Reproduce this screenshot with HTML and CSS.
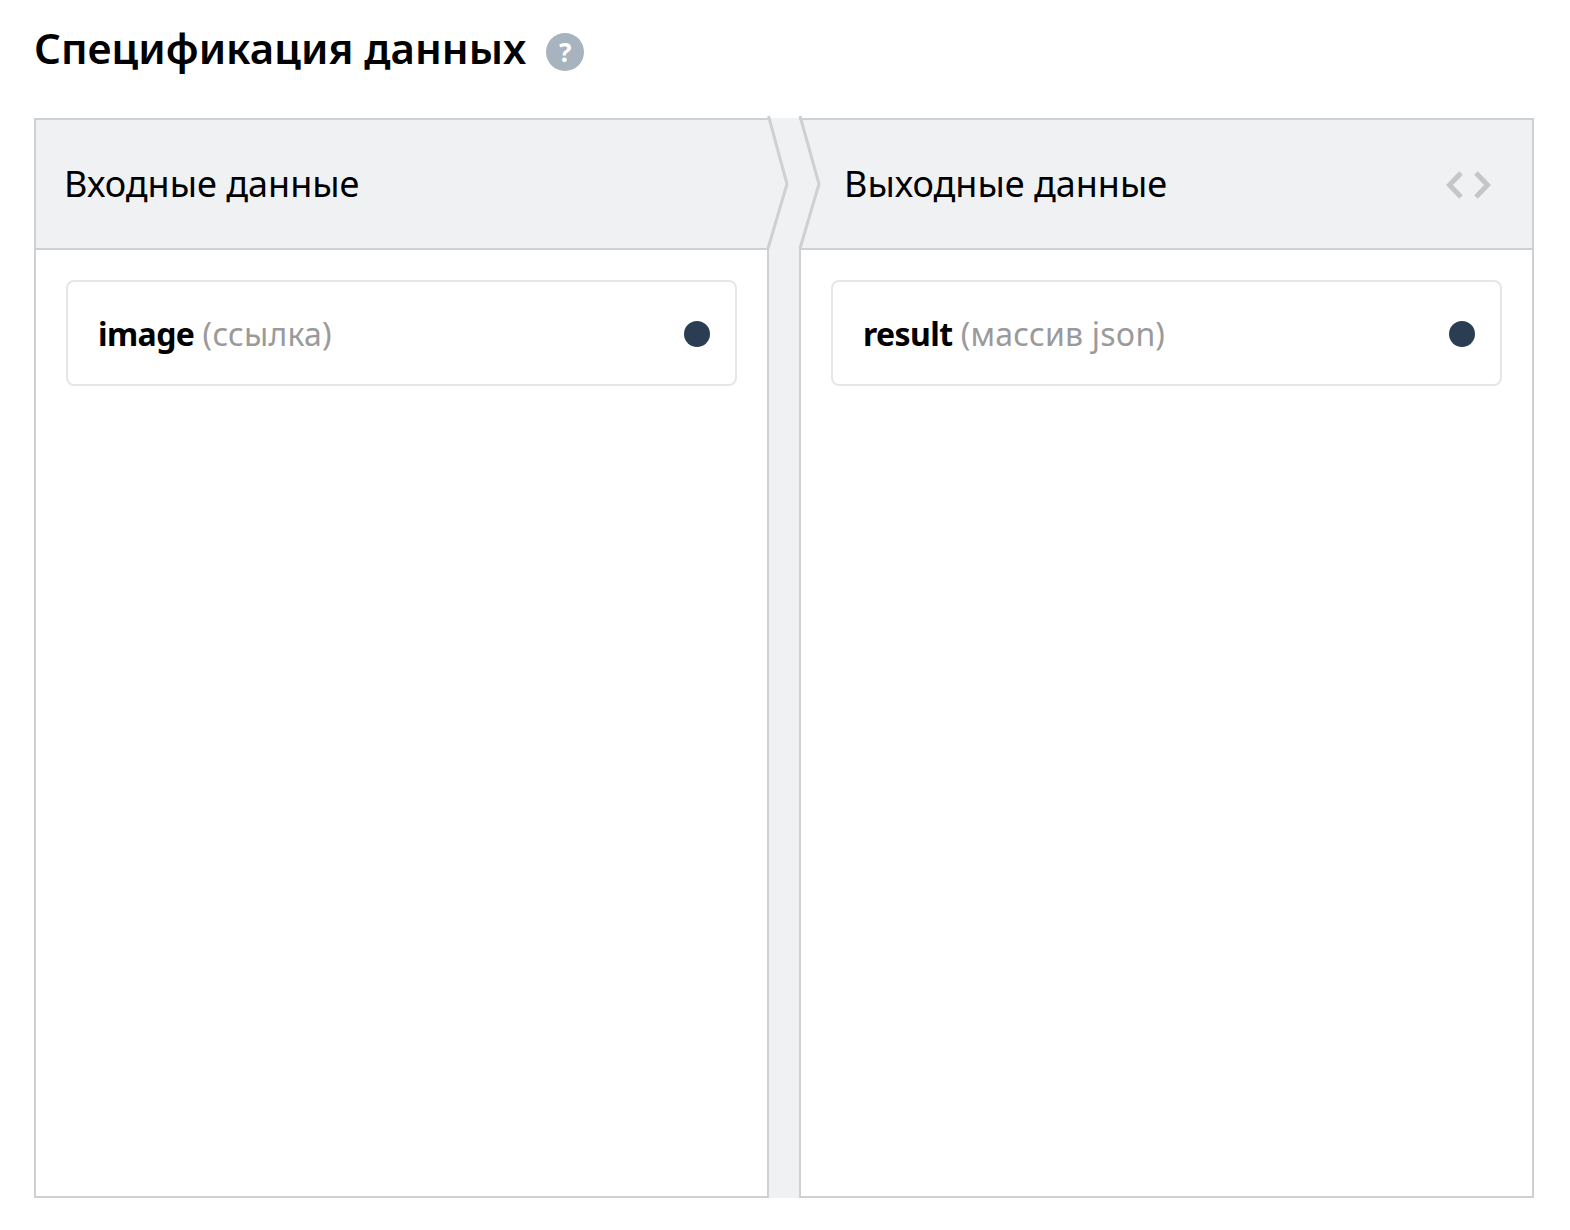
FILE: index.html
```
<!DOCTYPE html>
<html lang="ru">
<head>
<meta charset="utf-8">
<title>Спецификация данных</title>
<link rel="stylesheet" href="styles.css">
</head>
<body>
<div class="title-row">
  <h1 class="title">Спецификация данных</h1>
  <span class="help">?</span>
</div>
<div class="spec">
  <section class="panel panel-left">
    <header class="panel-head"><h2 class="panel-title">Входные данные</h2></header>
    <div class="panel-body">
      <div class="field">
        <span class="field-text"><b class="field-name">image</b> <span class="field-type">(ссылка)</span></span>
        <span class="dot"></span>
      </div>
    </div>
  </section>
  <div class="gutter">
    <svg class="chevrons" width="60" height="134" viewBox="0 0 60 134" aria-hidden="true">
      <path d="M1.500 0 L20 68 L1 132.500" />
      <path d="M33 0 L52 68 L33 132.500" />
    </svg>
  </div>
  <section class="panel panel-right">
    <header class="panel-head">
      <h2 class="panel-title">Выходные данные</h2>
      <svg class="code-icon" width="46" height="28" viewBox="0 0 46 28" aria-hidden="true">
        <path d="M16 2 L4.500 14 L16 26 M31 2 L42.500 14 L31 26" />
      </svg>
    </header>
    <div class="panel-body">
      <div class="field">
        <span class="field-text"><b class="field-name">result</b> <span class="field-type">(массив json)</span></span>
        <span class="dot"></span>
      </div>
    </div>
  </section>
</div>
</body>
</html>
```
FILE: styles.css
```
* { box-sizing: border-box; }
html, body { margin: 0; background: #fff; }
body {
  padding: 0 36px 0 34px;
  font-family: "Noto Sans", "Open Sans", sans-serif;
  color: #000;
}
.title-row {
  display: flex;
  align-items: center;
  height: 118px;
  padding-bottom: 22px;
  gap: 20px;
}
.title {
  margin: 0;
  font-size: 42px;
  line-height: 54px;
  font-weight: 600;
}
.help {
  width: 38px;
  height: 38px;
  margin-top: 8px;
  border-radius: 50%;
  background: #a7b3be;
  color: #fff;
  font-size: 26px;
  font-weight: 700;
  line-height: 38px;
  text-align: center;
}
.spec {
  display: grid;
  grid-template-columns: 735px 30px 735px;
  height: 1080px;
}
.panel {
  display: flex;
  flex-direction: column;
  border: 2px solid #cfd0d1;
}
.panel-left { border-right: 0; }
.panel-right { border-left: 0; }
.panel-head {
  display: flex;
  align-items: center;
  justify-content: space-between;
  flex: 0 0 130px;
  background: #f0f1f3;
  border-bottom: 2px solid #cfd0d1;
  padding: 0 41px 0 28px;
}
.panel-right .panel-head { padding-left: 45px; }
.panel-title {
  margin: 0;
  font-size: 36px;
  line-height: 48px;
  font-weight: 400;
}
.panel-body {
  flex: 1;
  padding: 30px;
}
.panel-left .panel-body { border-right: 2px solid #cfd0d1; }
.panel-right .panel-body { border-left: 2px solid #cfd0d1; }
.field {
  display: flex;
  align-items: center;
  justify-content: space-between;
  height: 106px;
  padding: 2px 25px 0 30px;
  border: 2px solid #e6e6e6;
  border-radius: 8px;
  background: #fff;
}
.field-text { font-size: 32px; line-height: 44px; }
.field-name { font-weight: 700; letter-spacing: -0.6px; }
.field-type { color: #9a9a9a; letter-spacing: 0.2px; }
.dot {
  width: 26px;
  height: 26px;
  border-radius: 50%;
  background: #2b3d52;
}
.gutter {
  position: relative;
  background: #f0f1f3;
}
.chevrons {
  position: absolute;
  left: -2px;
  top: -2px;
  overflow: visible;
  fill: none;
  stroke: #cfd0d1;
  stroke-width: 3;
}
.code-icon {
  fill: none;
  stroke: #c4c6c7;
  stroke-width: 5;
  transform: translateY(1px);
}
```
